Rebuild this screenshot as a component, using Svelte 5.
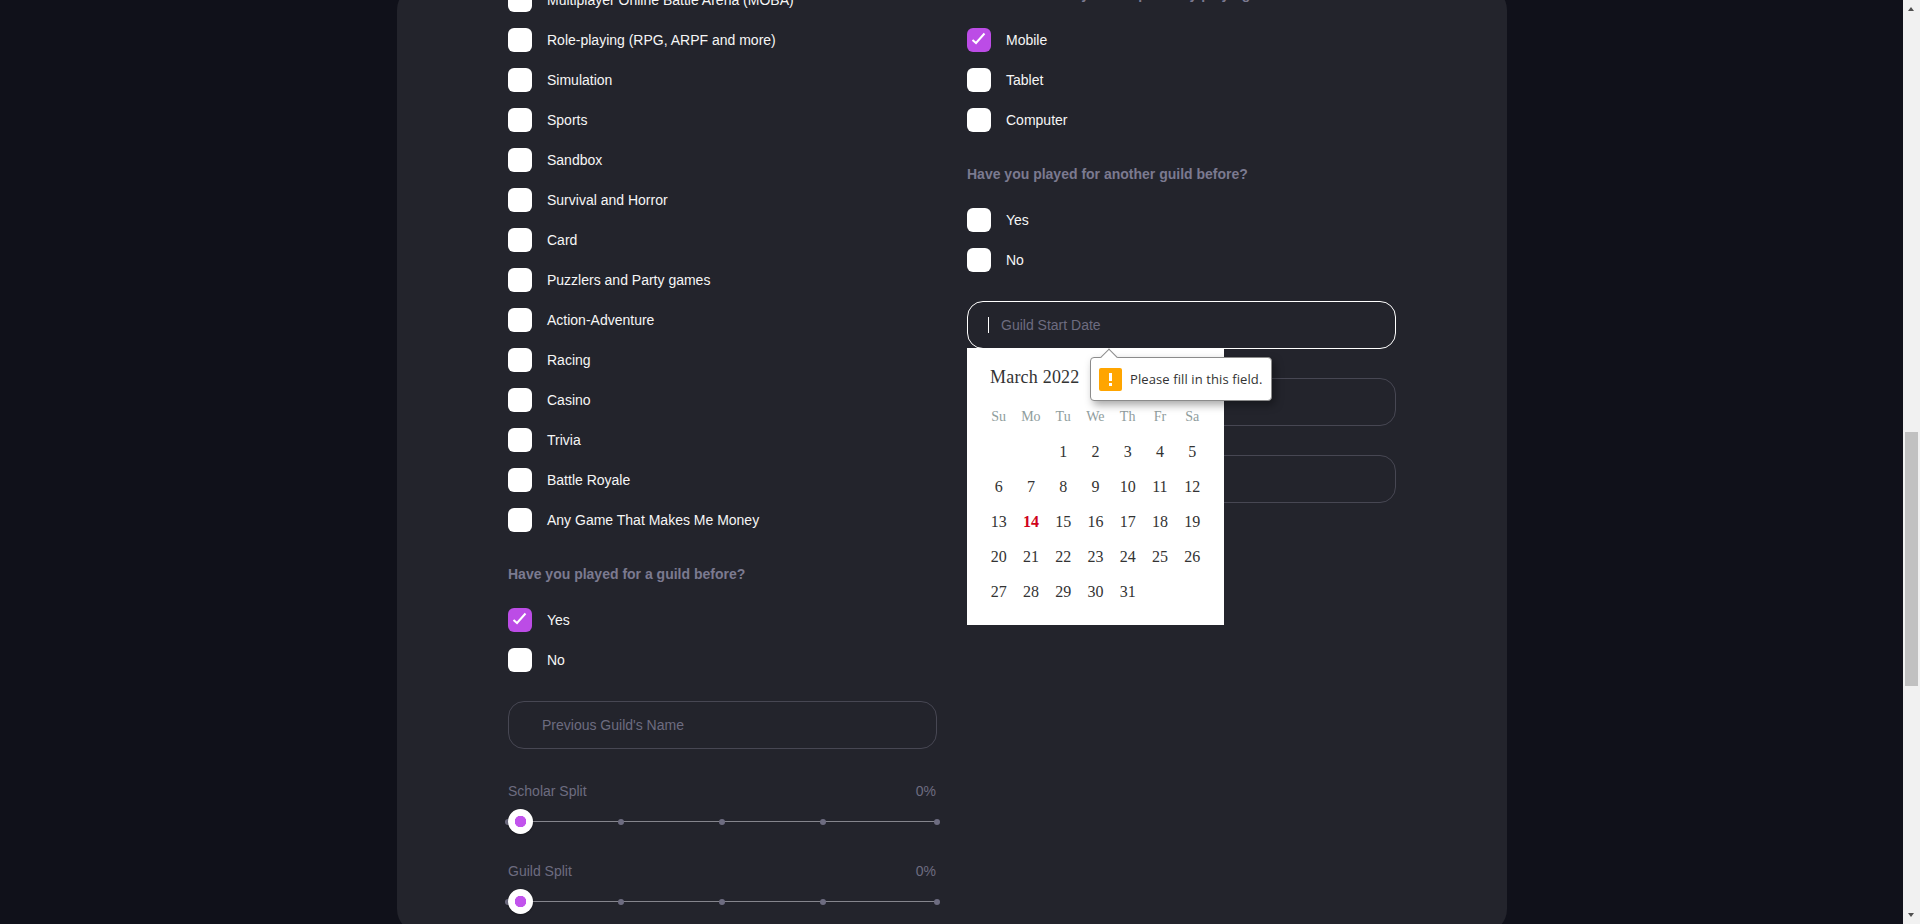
<script lang="ts">
  const genres = [
    "Multiplayer Online Battle Arena (MOBA)",
    "Role-playing (RPG, ARPF and more)",
    "Simulation",
    "Sports",
    "Sandbox",
    "Survival and Horror",
    "Card",
    "Puzzlers and Party games",
    "Action-Adventure",
    "Racing",
    "Casino",
    "Trivia",
    "Battle Royale",
    "Any Game That Makes Me Money",
  ];

  const sliders = ["Scholar Split", "Guild Split"];
  // the marks are not evenly spaced in the original widget
  const marks = [0, 112.5, 213.5, 315, 429];

  const weekdays = ["Su", "Mo", "Tu", "We", "Th", "Fr", "Sa"];
  const blanks = [0, 1];
  const days = Array.from({ length: 31 }, (_, i) => i + 1);
  const today = 14;
</script>

{#snippet option(label, checked = false)}
  <label class="option">
    <span class="box" class:checked>
      {#if checked}
        <svg width="24" height="24" viewBox="0 0 24 24">
          <path d="M5.5 12 L9 15 L17.5 5.5" fill="none" stroke="#fff" stroke-width="2" />
        </svg>
      {/if}
    </span>
    {label}
  </label>
{/snippet}

<div class="page">
  <div class="viewport">
    <div class="card">
      <section class="column left">
        <div class="options">
          {#each genres as genre}
            {@render option(genre)}
          {/each}
        </div>

        <h3>Have you played for a guild before?</h3>
        <div class="options">
          {@render option("Yes", true)}
          {@render option("No")}
        </div>

        <input class="field previous" placeholder="Previous Guild's Name" />

        {#each sliders as name}
          <div class="slider-head">
            <span>{name}</span>
            <span>0%</span>
          </div>
          <div class="slider">
            <div class="track"></div>
            {#each marks as mark}
              <span class="mark" style="left: {mark}px"></span>
            {/each}
            <span class="thumb"></span>
          </div>
        {/each}
      </section>

      <section class="column">
        <h3 class="first">Which device do you use primarily playing</h3>
        <div class="options">
          {@render option("Mobile", true)}
          {@render option("Tablet")}
          {@render option("Computer")}
        </div>

        <h3>Have you played for another guild before?</h3>
        <div class="options">
          {@render option("Yes")}
          {@render option("No")}
        </div>

        <div class="fields">
          <div class="date-field">
            <input class="field focused" placeholder="Guild Start Date" />
            <span class="caret"></span>

            <div class="calendar">
              <div class="month">March 2022</div>
              <div class="grid">
                {#each weekdays as day}
                  <span class="weekday">{day}</span>
                {/each}
                {#each blanks as blank}
                  <span></span>
                {/each}
                {#each days as day}
                  <span class="day" class:today={day === today}>{day}</span>
                {/each}
              </div>
            </div>

            <div class="tooltip">
              <span class="warn">
                <svg width="23" height="23" viewBox="0 0 23 23">
                  <rect x="10" y="5" width="3" height="8" fill="#fff" />
                  <rect x="10" y="15" width="3" height="3" fill="#fff" />
                </svg>
              </span>
              <span class="tip-text">Please fill in this field.</span>
            </div>
          </div>
          <input class="field" />
          <input class="field" />
        </div>
      </section>
    </div>
  </div>

  <div class="scrollbar">
    <span class="arrow up"></span>
    <span class="thumb-bar"></span>
    <span class="arrow down"></span>
  </div>
</div>

<style>
  :global(body) {
    background: #10111a;
  }

  .page {
    display: flex;
    height: 924px;
    overflow: hidden;
    background: #10111a;
    font-family: "Liberation Sans", Arial, sans-serif;
    font-size: 14px;
    line-height: 16px;
  }

  .viewport {
    flex: 1;
    min-width: 0;
  }

  .card {
    display: grid;
    grid-template-columns: 429px 429px;
    gap: 30px;
    align-items: start;
    width: 1110px;
    box-sizing: border-box;
    margin: -14px 0 0 397px;
    padding: 0 111px 18px;
    background: #23242c;
    border-radius: 24px;
  }

  .column {
    display: flex;
    flex-direction: column;
  }

  .left {
    padding-top: 2px;
  }

  h3 {
    margin: 34px 0 26px;
    font-size: 14px;
    line-height: 16px;
    font-weight: 700;
    color: #7b7a90;
  }

  h3.first {
    margin-top: 0;
  }

  .options {
    display: flex;
    flex-direction: column;
    gap: 16px;
  }

  .option {
    display: flex;
    align-items: center;
    gap: 15px;
    height: 24px;
    color: #f6f6f6;
  }

  .box {
    flex: none;
    width: 24px;
    height: 24px;
    border-radius: 6px;
    background: #fff;
  }

  .box.checked {
    background: #bc4ce6;
  }

  .box svg {
    display: block;
  }

  .fields {
    display: flex;
    flex-direction: column;
    gap: 29px;
    margin-top: 29px;
  }

  .field {
    display: block;
    width: 100%;
    height: 48px;
    box-sizing: border-box;
    padding: 0 0 0 33px;
    background: transparent;
    border: 1px solid #474753;
    border-radius: 16px;
    outline: none;
    font: inherit;
    color: #fff;
  }

  .field::placeholder {
    color: #6d6c80;
    opacity: 1;
  }

  .field.focused {
    border-color: #fff;
  }

  .previous {
    margin-top: 29px;
  }

  .date-field {
    position: relative;
  }

  .caret {
    position: absolute;
    left: 21px;
    top: 16px;
    width: 1px;
    height: 16px;
    background: #fff;
  }

  .calendar {
    position: absolute;
    left: 0;
    top: 47px;
    width: 257px;
    height: 277px;
    box-sizing: border-box;
    padding: 19px 15px 0 15.5px;
    background: #fff;
    font-family: "Liberation Serif", "Times New Roman", serif;
  }

  .month {
    padding-left: 7.5px;
    font-size: 18px;
    line-height: 20px;
    letter-spacing: 0.2px;
    color: #333;
  }

  .grid {
    display: grid;
    grid-template-columns: repeat(7, 32.25px);
    grid-auto-rows: 35px;
    margin-top: 12px;
    text-align: center;
    font-size: 16px;
    line-height: 35px;
  }

  .weekday {
    font-size: 14px;
    color: #8f9d9d;
  }

  .day {
    color: #333;
  }

  .day.today {
    color: #d0021b;
    font-weight: 700;
  }

  .tooltip {
    position: absolute;
    left: 123px;
    top: 56px;
    display: flex;
    align-items: center;
    gap: 8px;
    width: 182px;
    height: 44px;
    box-sizing: border-box;
    padding-left: 8px;
    background: #fff;
    border: 1px solid #8b8b8b;
    border-radius: 4px;
    box-shadow: 3px 4px 8px rgba(0, 0, 0, 0.35);
    font-family: "Open Sans", sans-serif;
    font-size: 13px;
    letter-spacing: 0.1px;
    color: #333;
  }

  .tooltip::before {
    content: "";
    position: absolute;
    left: 12px;
    top: -7px;
    width: 11px;
    height: 11px;
    background: #fff;
    border: 1px solid #8b8b8b;
    border-right: none;
    border-bottom: none;
    transform: rotate(45deg);
  }

  .warn {
    flex: none;
    width: 23px;
    height: 23px;
    border-radius: 2px;
    background: #ffa500;
  }

  .warn svg {
    display: block;
  }

  .tip-text {
    white-space: nowrap;
  }

  .slider-head {
    display: flex;
    justify-content: space-between;
    margin-top: 28px;
    padding-right: 1px;
    color: #6d6c80;
  }

  .previous + .slider-head {
    margin-top: 34px;
  }

  .slider {
    position: relative;
    height: 26px;
    margin-top: 10px;
  }

  .track {
    position: absolute;
    left: 0;
    right: 0;
    top: 12px;
    height: 1px;
    background: #85858d;
  }

  .mark {
    position: absolute;
    top: 10px;
    width: 6px;
    height: 6px;
    margin-left: -3px;
    border-radius: 50%;
    background: #6d6c80;
  }

  .thumb {
    position: absolute;
    left: -0.5px;
    top: 0;
    width: 25px;
    height: 25px;
    border-radius: 50%;
    background: radial-gradient(circle, #c154ec 5.5px, #fff 6px);
    box-shadow: 0 1px 2px rgba(0, 0, 0, 0.3);
  }

  .scrollbar {
    position: relative;
    flex: none;
    width: 17px;
    background: #f1f1f1;
  }

  .thumb-bar {
    position: absolute;
    left: 2px;
    top: 432px;
    width: 13px;
    height: 254px;
    background: #c1c1c1;
  }

  .arrow {
    position: absolute;
    left: 5px;
    width: 0;
    height: 0;
    border-left: 3.5px solid transparent;
    border-right: 3.5px solid transparent;
  }

  .arrow.up {
    top: 7px;
    border-bottom: 4px solid #505050;
  }

  .arrow.down {
    bottom: 7px;
    border-top: 4px solid #505050;
  }
</style>
